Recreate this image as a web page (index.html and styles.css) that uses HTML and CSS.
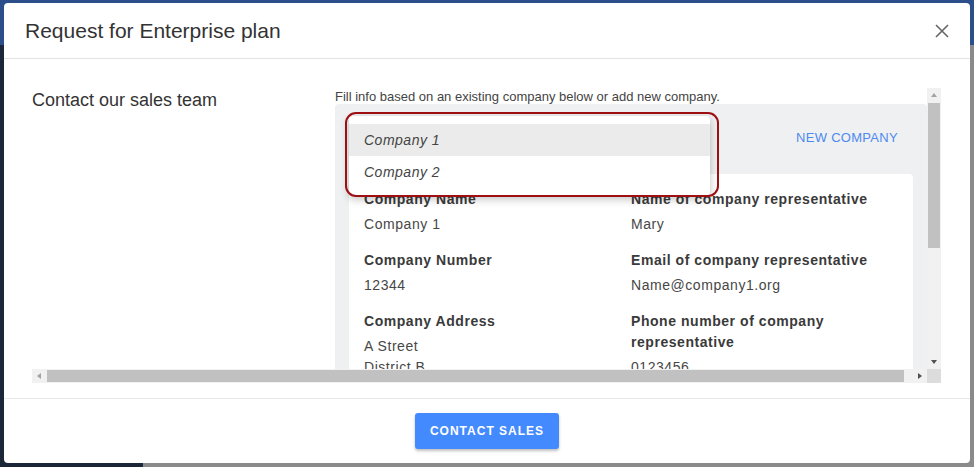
FILE: index.html
```html
<!DOCTYPE html>
<html lang="en">
<head>
<meta charset="utf-8">
<title>Request for Enterprise plan</title>
<link rel="stylesheet" href="styles.css">
</head>
<body>
<div class="backdrop">
  <div class="modal">
    <header class="modal-header">
      <h2 class="modal-title">Request for Enterprise plan</h2>
      <button class="close-btn" aria-label="Close">
        <svg width="14" height="14" viewBox="0 0 14 14"><path d="M1 1L13 13M13 1L1 13" stroke="#666" stroke-width="1.6" fill="none"/></svg>
      </button>
    </header>
    <div class="modal-body">
      <div class="scroller">
        <div class="viewport">
          <div class="content">
            <div class="side">Contact our sales team</div>
            <div class="main">
              <p class="hint">Fill info based on an existing company below or add new company.</p>
              <div class="panel">
                <div class="panel-top">
                  <div class="menu">
                    <div class="menu-item active">Company 1</div>
                    <div class="menu-item">Company 2</div>
                  </div>
                  <div class="annotation"></div>
                  <button class="new-btn">NEW COMPANY</button>
                </div>
                <div class="card">
                  <div class="field">
                    <div class="label">Company Name</div>
                    <div class="value">Company 1</div>
                  </div>
                  <div class="field">
                    <div class="label">Name of company representative</div>
                    <div class="value">Mary</div>
                  </div>
                  <div class="field">
                    <div class="label">Company Number</div>
                    <div class="value">12344</div>
                  </div>
                  <div class="field">
                    <div class="label">Email of company representative</div>
                    <div class="value">Name@company1.org</div>
                  </div>
                  <div class="field">
                    <div class="label">Company Address</div>
                    <div class="value">A Street<br>District B</div>
                  </div>
                  <div class="field">
                    <div class="label">Phone number of company representative</div>
                    <div class="value">0123456</div>
                  </div>
                </div>
              </div>
            </div>
          </div>
        </div>
        <div class="vbar">
          <div class="sb-btn"><span class="arr up dis"></span></div>
          <div class="vtrack"><div class="vthumb"></div></div>
          <div class="sb-btn"><span class="arr down"></span></div>
        </div>
        <div class="hbar">
          <div class="sb-btn"><span class="arr left dis"></span></div>
          <div class="htrack"><div class="hthumb"></div></div>
          <div class="sb-btn"><span class="arr right"></span></div>
        </div>
        <div class="corner"></div>
      </div>
    </div>
    <footer class="modal-footer">
      <button class="primary-btn">CONTACT SALES</button>
    </footer>
  </div>
</div>
</body>
</html>
```
FILE: styles.css
```css
* { box-sizing: border-box; }
html, body { margin: 0; padding: 0; }
body {
  width: 974px;
  height: 467px;
  overflow: hidden;
  font-family: "Liberation Sans", Arial, sans-serif;
  background: #1c2639;
}
.backdrop {
  width: 974px;
  height: 467px;
  padding: 3px 4px 4px 4px;
  background:
    linear-gradient(to bottom, #2c4f8c 0, #2c4f8c 45px, transparent 45px),
    linear-gradient(to right, #1c2639 0, #1c2639 143px, #8a8a8a 143px);
}
.modal {
  width: 966px;
  height: 460px;
  background: #fff;
  border-radius: 4px;
  display: flex;
  flex-direction: column;
  overflow: hidden;
}
.modal-header {
  height: 56px;
  flex: none;
  display: flex;
  align-items: center;
  justify-content: space-between;
  padding: 1px 21px 0 21px;
  border-bottom: 1px solid #e3e3e3;
}
.modal-title {
  margin: 0;
  font-size: 21px;
  font-weight: normal;
  line-height: 24px;
  color: #333;
}
.close-btn {
  border: 0;
  background: none;
  padding: 0;
  width: 14px;
  height: 14px;
  margin-right: 0;
  display: flex;
}
.modal-body {
  height: 339px;
  flex: none;
  padding: 29px 29px 15px 28px;
}
.scroller {
  width: 909px;
  height: 295px;
  display: grid;
  grid-template-columns: 895px 14px;
  grid-template-rows: 281px 14px;
}
.viewport {
  overflow: hidden;
  position: relative;
}
.content {
  display: flex;
  width: 909px;
}
.side {
  width: 303px;
  flex: none;
  padding-top: 2px;
  font-size: 18px;
  line-height: 21px;
  color: #333;
}
.main {
  width: 606px;
  flex: none;
  padding-right: 14px;
}
.hint {
  margin: 0;
  padding-top: 2px;
  height: 16px;
  font-size: 13px;
  line-height: 14px;
  color: #444;
  white-space: nowrap;
}
.panel {
  background: #eff0f2;
  border-radius: 4px 4px 0 0;
  padding: 0 14px 14px 14px;
}
.panel-top {
  position: relative;
  height: 70px;
  padding-top: 15px;
  display: flex;
  justify-content: flex-end;
  align-items: flex-start;
}
.new-btn {
  height: 36px;
  border: 0;
  background: none;
  padding: 0 15px;
  font-family: "Liberation Sans", Arial, sans-serif;
  font-size: 13px;
  letter-spacing: 0.3px;
  color: #4d8af0;
}
.menu {
  position: absolute;
  left: 0;
  top: 12px;
  width: 361px;
  padding: 8px 0;
  background: #fff;
  border-radius: 4px;
  box-shadow: 0 3px 8px rgba(0,0,0,0.25);
  z-index: 2;
}
.menu-item {
  height: 32px;
  line-height: 32px;
  padding-left: 15px;
  font-size: 14px;
  font-style: italic;
  letter-spacing: 0.5px;
  color: #444;
}
.menu-item.active { background: #ebebeb; }
.annotation {
  position: absolute;
  left: -4px;
  top: 8px;
  width: 374px;
  height: 85px;
  border: 2px solid #9e0f12;
  border-radius: 11px;
  z-index: 3;
}
.card {
  background: #fff;
  border-radius: 4px;
  padding: 15px 15px 14px 15px;
  display: grid;
  grid-template-columns: 267px 267px;
  row-gap: 15px;
}
.label {
  font-size: 14px;
  font-weight: bold;
  line-height: 21px;
  letter-spacing: 0.55px;
  color: #3a3a3a;
  margin-bottom: 4px;
}
.value {
  font-size: 14px;
  line-height: 21px;
  letter-spacing: 0.55px;
  color: #474747;
}
.field:nth-child(even) .label { padding-right: 20px; }
.vbar {
  background: #f1f1f1;
  display: flex;
  flex-direction: column;
}
.hbar {
  background: #f1f1f1;
  display: flex;
}
.sb-btn {
  width: 14px;
  height: 14px;
  flex: none;
  display: flex;
  align-items: center;
  justify-content: center;
}
.vtrack { flex: 1; padding: 1px 1px; }
.vthumb { width: 12px; height: 145px; background: #c1c1c1; }
.htrack { flex: 1; padding: 1px 1px; }
.hthumb { height: 12px; width: 857px; background: #c1c1c1; }
.corner { background: #dcdcdc; }
.arr { width: 0; height: 0; border: 3.5px solid transparent; }
.arr.up { border-bottom: 4px solid #505050; border-top: 0; }
.arr.down { border-top: 4px solid #505050; border-bottom: 0; }
.arr.left { border-right: 4px solid #505050; border-left: 0; }
.arr.right { border-left: 4px solid #505050; border-right: 0; }
.arr.up.dis { border-bottom-color: #a3a3a3; }
.arr.left.dis { border-right-color: #a3a3a3; }
.modal-footer {
  height: 65px;
  flex: none;
  border-top: 1px solid #e8e8e8;
  display: flex;
  justify-content: center;
  padding-top: 14px;
}
.primary-btn {
  width: 144px;
  height: 36px;
  border: 0;
  border-radius: 3px;
  background: #448aff;
  color: #fff;
  font-family: "Liberation Sans", Arial, sans-serif;
  font-size: 12px;
  font-weight: bold;
  letter-spacing: 1px;
  box-shadow: 0 2px 3px rgba(0,0,0,0.25);
}
```
